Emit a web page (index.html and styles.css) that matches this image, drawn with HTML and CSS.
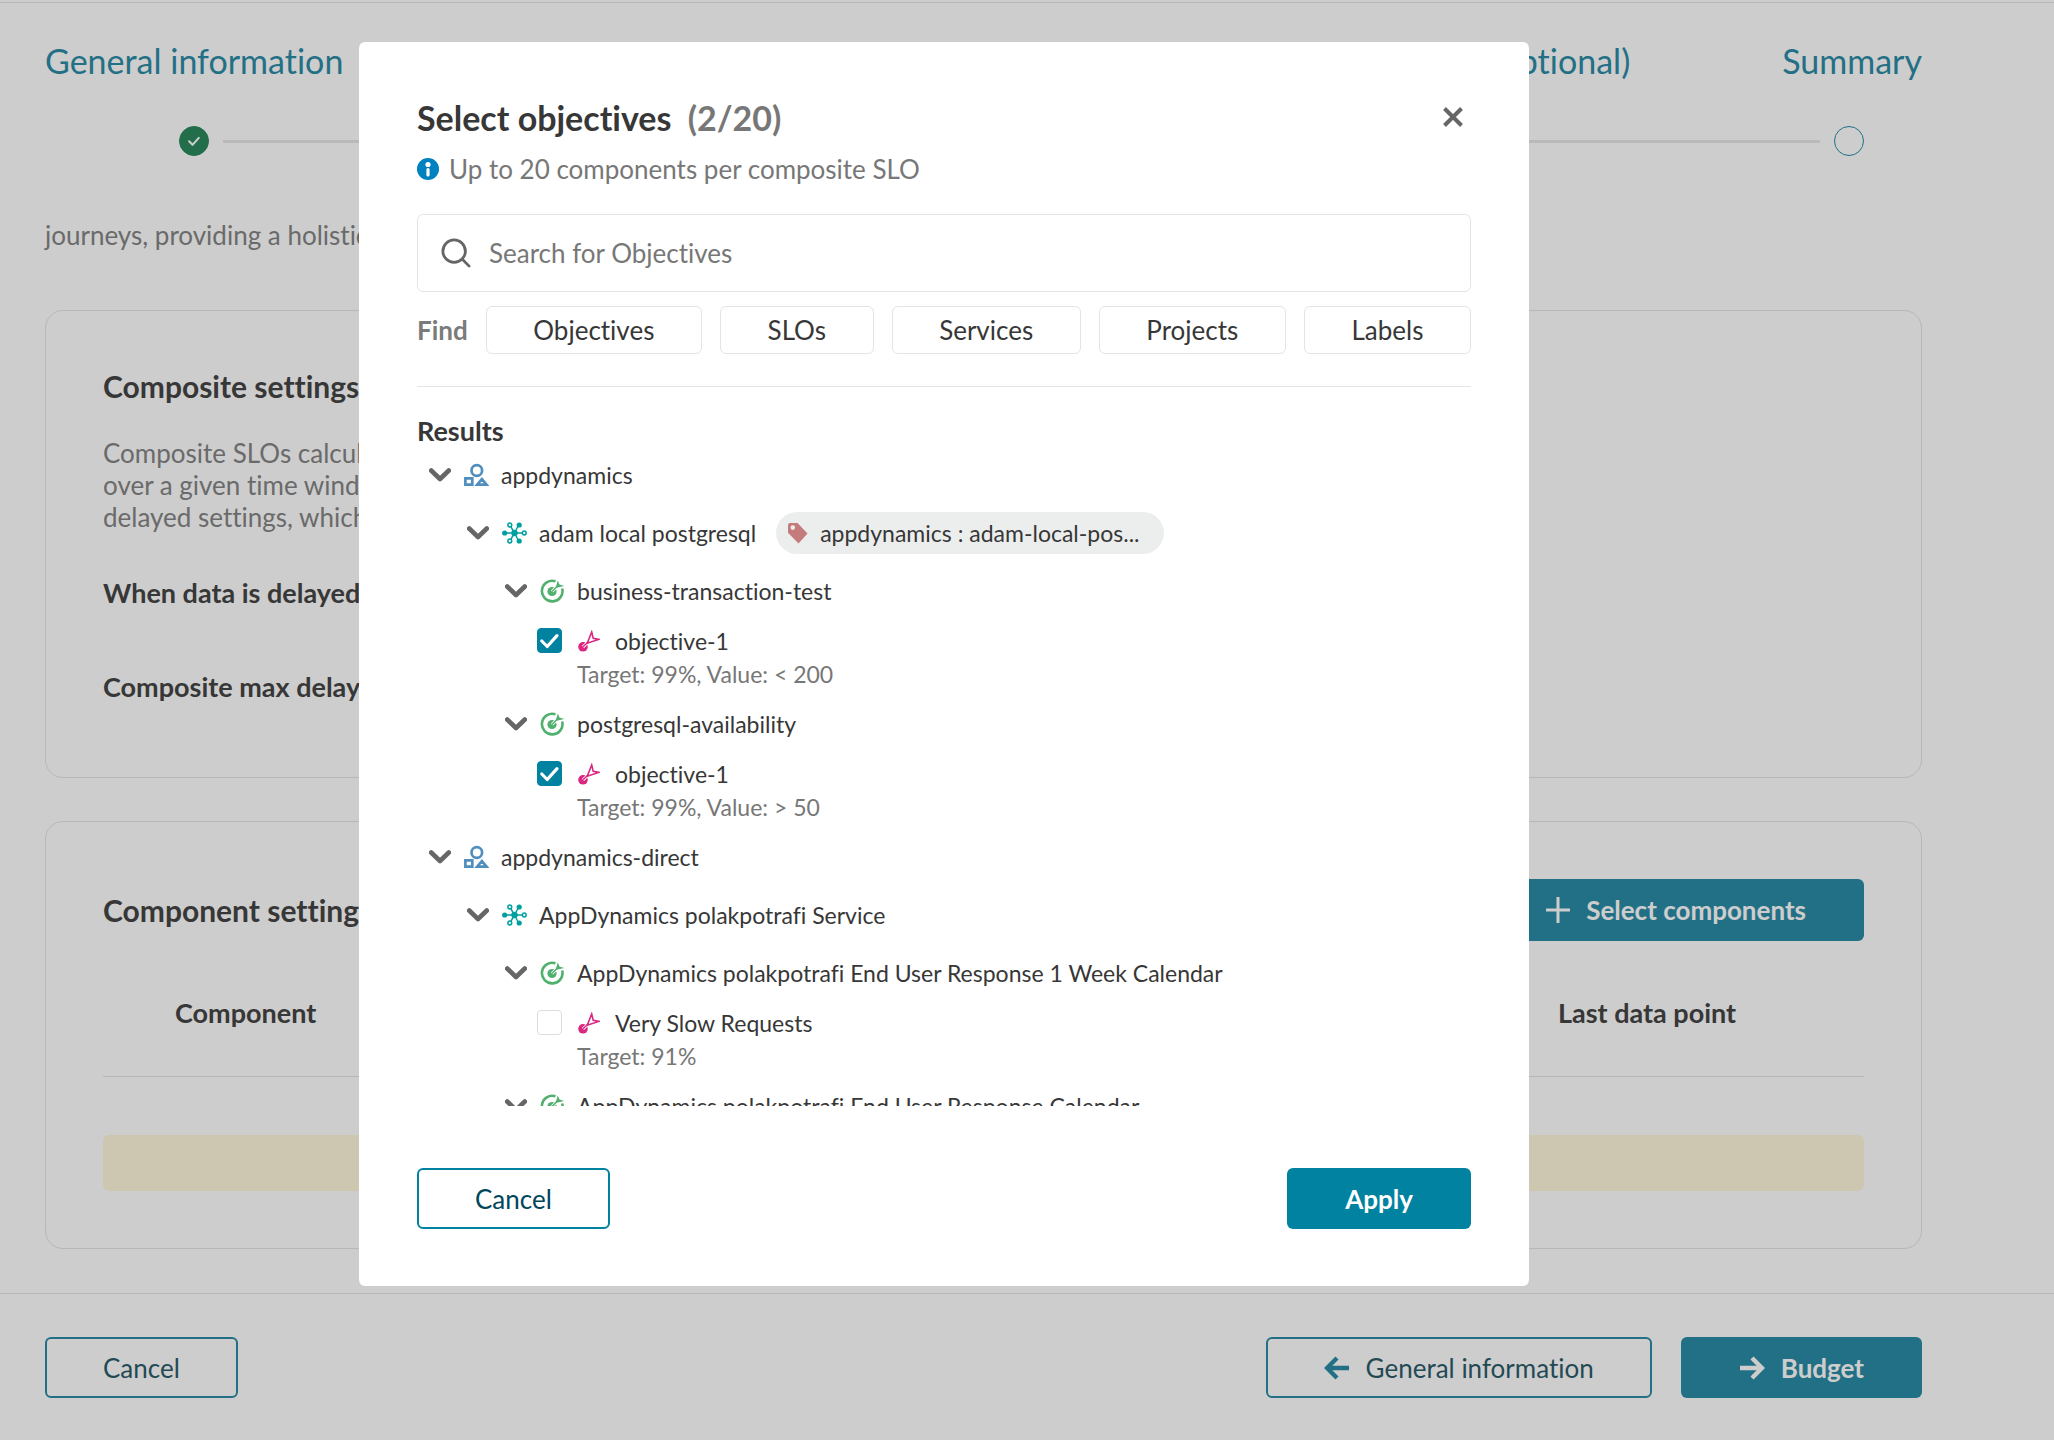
FILE: index.html
```html
<!DOCTYPE html>
<html lang="en">
<head>
<meta charset="utf-8">
<title>Create composite SLO</title>
<meta name="viewport" content="width=device-width, initial-scale=1">
<link rel="stylesheet" href="styles.css">
</head>
<body>
<svg class="sprite" aria-hidden="true">
  <symbol id="i-chevron" viewBox="0 0 22 14"><path d="M2.2 2.5 11 11l8.800-8.500" fill="none" stroke="currentColor" stroke-width="4.600" stroke-linecap="round" stroke-linejoin="round"/></symbol>
  <symbol id="i-project" viewBox="0 0 25 22"><g fill="none" stroke="currentColor" stroke-width="2.700"><circle cx="12.800" cy="6.500" r="5.300"/><path d="M1.400 14.400h6.900v6.200H1.400zM13.200 20.600l4.700-5.600 4.600 5.600z"/></g></symbol>
  <symbol id="i-service" viewBox="0 0 25 22"><g stroke="currentColor" stroke-width="1.500" fill="none"><path d="M3 11h17M12.500 11 8.800 4.600M12.500 11l3.900-7.500M12.500 11l-3.700 6.400M12.500 11l3.900 7.500"/><circle cx="22.300" cy="11" r="1.900"/><circle cx="7.800" cy="3" r="1.900"/><circle cx="7.800" cy="19" r="1.900"/></g><g fill="currentColor"><circle cx="12.500" cy="11" r="3.200"/><circle cx="2.700" cy="11" r="2.600"/><circle cx="17.200" cy="3" r="2.600"/><circle cx="17.200" cy="19" r="2.600"/></g></symbol>
  <symbol id="i-slo" viewBox="0 0 24 24"><path d="M15 2.300A10.300 10.300 0 1 0 21.700 9.500" fill="none" stroke="currentColor" stroke-width="2.600"/><circle cx="11.500" cy="12.500" r="4.600" fill="currentColor"/><path d="M11.500 12.500 17 7" stroke="#fff" stroke-width="3"/><path d="M11.500 12.500 17 7" stroke="currentColor" stroke-width="1.500"/><path d="m15 8.900 2.300-7.400 1.700 4.100 4.700 1.400z" fill="currentColor"/></symbol>
  <symbol id="i-objective" viewBox="0 0 22 22"><circle cx="5" cy="16.800" r="4.800" fill="currentColor"/><path d="M5 16.800 10 12" stroke="#fff" stroke-width="3"/><path d="M5 16.800 10.500 11.500" stroke="currentColor" stroke-width="1.400"/><path d="M9.200 13.200 13.700 2l1.500 6.300 5.600 1.100z" fill="none" stroke="currentColor" stroke-width="1.600"/></symbol>
  <symbol id="i-tag" viewBox="0 0 20 21"><path fill="currentColor" fill-rule="evenodd" d="M2 0h7.500L19.500 10.500 10.500 20.500 0 9.800V2a2 2 0 0 1 2-2zm2.800 2.300a2.300 2.300 0 1 0 0 4.600 2.300 2.300 0 0 0 0-4.600z"/></symbol>
  <symbol id="i-tick" viewBox="0 0 25 25"><path d="m4.800 13 5.400 5.500L20 7.700" fill="none" stroke="currentColor" stroke-width="3.200" stroke-linecap="round" stroke-linejoin="round"/></symbol>
  <symbol id="i-arrow" viewBox="0 0 26 24"><path d="M1 12h22M13 2l10 10-10 10" fill="none" stroke="currentColor" stroke-width="4.400"/></symbol>
</svg>

<main class="page">
  <header class="stepper">
    <nav class="step-names">
      <a href="#general">General information</a>
      <a href="#optional" class="step-late">Alerts (optional)</a>
      <a href="#summary">Summary</a>
    </nav>
    <div class="track">
      <span class="dot dot-done"><svg class="dot-tick"><use href="#i-tick"/></svg></span>
      <span class="rail"></span>
      <span class="dot"></span>
    </div>
  </header>

  <p class="lead">journeys, providing a holistic</p>

  <section class="card">
    <h2>Composite settings</h2>
    <p class="about">Composite SLOs calculate<br>over a given time window<br>delayed settings, which</p>
    <h3>When data is delayed</h3>
    <h3>Composite max delay</h3>
  </section>

  <section class="card">
    <div class="card-head">
      <h2>Component settings</h2>
      <button class="btn btn-page btn-tall"><svg class="plus" viewBox="0 0 24 26"><path d="M12 0v26M0 13h24" stroke="currentColor" stroke-width="3"/></svg>Select components</button>
    </div>
    <table class="components">
      <thead><tr><th>Component</th><th class="last">Last data point</th></tr></thead>
    </table>
    <div class="notice"></div>
  </section>
</main>

<footer class="bar">
  <button class="btn btn-line btn-line-page">Cancel</button>
  <div class="bar-end">
    <button class="btn btn-line btn-line-page"><svg class="arrow back"><use href="#i-arrow"/></svg>General information</button>
    <button class="btn btn-page"><svg class="arrow"><use href="#i-arrow"/></svg>Budget</button>
  </div>
</footer>

<div class="overlay">
  <div class="modal" role="dialog" aria-modal="true" aria-labelledby="modal-title">
    <div class="modal-head">
      <h1 id="modal-title">Select objectives <span>(2/20)</span></h1>
      <button class="close" aria-label="Close"><svg viewBox="0 0 22 22"><path d="m2.500 2.500 17 17m0-17-17 17" stroke="currentColor" stroke-width="4"/></svg></button>
    </div>
    <p class="hint"><svg viewBox="0 0 22 22"><circle cx="11" cy="11" r="11" fill="#0082c0"/><circle cx="11" cy="6.500" r="2.600" fill="#fff"/><path d="M11 11.500v5.500" stroke="#fff" stroke-width="3.200" stroke-linecap="round"/></svg>Up to 20 components per composite SLO</p>
    <label class="search">
      <svg viewBox="0 0 32 32"><g fill="none" stroke="currentColor" stroke-width="3" stroke-linecap="round"><circle cx="14" cy="14" r="12"/><path d="m23 23 7 7"/></g></svg>
      <input type="text" placeholder="Search for Objectives" aria-label="Search for Objectives">
    </label>
    <div class="find">
      <span>Find</span>
      <button>Objectives</button><button>SLOs</button><button>Services</button><button>Projects</button><button>Labels</button>
    </div>
    <h2 class="results">Results</h2>
    <ul class="tree">
      <li>
        <div class="row"><button class="fold" aria-label="Collapse appdynamics"><svg><use href="#i-chevron"/></svg></button><svg class="kind project"><use href="#i-project"/></svg>appdynamics</div>
        <ul>
          <li>
            <div class="row"><button class="fold" aria-label="Collapse adam local postgresql"><svg><use href="#i-chevron"/></svg></button><svg class="kind service"><use href="#i-service"/></svg>adam local postgresql <span class="chip"><svg><use href="#i-tag"/></svg>appdynamics : adam-local-pos...</span></div>
            <ul>
              <li>
                <div class="row"><button class="fold" aria-label="Collapse business-transaction-test"><svg><use href="#i-chevron"/></svg></button><svg class="kind slo"><use href="#i-slo"/></svg>business-transaction-test</div>
                <div class="objective">
                  <label><span class="box"><input type="checkbox" checked><svg><use href="#i-tick"/></svg></span><svg class="goal"><use href="#i-objective"/></svg>objective-1</label>
                  <p>Target: 99%, Value: &lt; 200</p>
                </div>
              </li>
              <li>
                <div class="row"><button class="fold" aria-label="Collapse postgresql-availability"><svg><use href="#i-chevron"/></svg></button><svg class="kind slo"><use href="#i-slo"/></svg>postgresql-availability</div>
                <div class="objective">
                  <label><span class="box"><input type="checkbox" checked><svg><use href="#i-tick"/></svg></span><svg class="goal"><use href="#i-objective"/></svg>objective-1</label>
                  <p>Target: 99%, Value: &gt; 50</p>
                </div>
              </li>
            </ul>
          </li>
        </ul>
      </li>
      <li>
        <div class="row"><button class="fold" aria-label="Collapse appdynamics-direct"><svg><use href="#i-chevron"/></svg></button><svg class="kind project"><use href="#i-project"/></svg>appdynamics-direct</div>
        <ul>
          <li>
            <div class="row"><button class="fold" aria-label="Collapse AppDynamics polakpotrafi Service"><svg><use href="#i-chevron"/></svg></button><svg class="kind service"><use href="#i-service"/></svg>AppDynamics polakpotrafi Service</div>
            <ul>
              <li>
                <div class="row"><button class="fold" aria-label="Collapse 1 Week Calendar"><svg><use href="#i-chevron"/></svg></button><svg class="kind slo"><use href="#i-slo"/></svg>AppDynamics polakpotrafi End User Response 1 Week Calendar</div>
                <div class="objective">
                  <label><span class="box"><input type="checkbox"><svg><use href="#i-tick"/></svg></span><svg class="goal"><use href="#i-objective"/></svg>Very Slow Requests</label>
                  <p>Target: 91%</p>
                </div>
              </li>
              <li>
                <div class="row"><button class="fold" aria-label="Collapse Calendar"><svg><use href="#i-chevron"/></svg></button><svg class="kind slo"><use href="#i-slo"/></svg>AppDynamics polakpotrafi End User Response Calendar</div>
              </li>
            </ul>
          </li>
        </ul>
      </li>
    </ul>
    <div class="modal-foot">
      <button class="btn btn-line">Cancel</button>
      <button class="btn btn-main">Apply</button>
    </div>
  </div>
</div>
</body>
</html>
```

FILE: styles.css
```css
:root {
  --ink: #373737;
  --muted: #777;
  --line: #e2e2e2;
  --teal: #0082a0;
  --teal-page: #1b83a0;
  --navy: #00475c;
  --text-s: 23px;
  --text-m: 26px;
  --text-bold: 27px;
  --text-l: 30px;
  --text-xl: 34px;
}

* { box-sizing: border-box; }

body {
  margin: 0;
  min-height: 100vh;
  display: flex;
  flex-direction: column;
  padding-top: 2px;
  background: #fff;
  color: var(--ink);
  font: 400 var(--text-m)/32px Lato, "Open Sans", sans-serif;
  font-variant-ligatures: none;
}

h1, h2, h3, p, ul { margin: 0; padding: 0; }
ul { list-style: none; }
button, input { font: inherit; color: inherit; font-variant-ligatures: none; }
button { cursor: pointer; }
svg { flex: none; display: block; }
.sprite { position: absolute; width: 0; height: 0; }

/* Wizard page */
.page {
  flex: 1;
  border-top: 1px solid var(--line);
  padding: 38px 132px 40px 45px;
}

.step-names {
  display: flex;
  gap: 152px;
  font-size: var(--text-xl);
  line-height: 40px;
}
.step-names a { color: var(--teal-page); text-decoration: none; }
.step-late { margin-left: auto; }

.track {
  display: flex;
  align-items: center;
  gap: 14px;
  padding: 0 58px 0 134px;
  margin-top: 45px;
}
.rail { flex: 1; height: 3px; background: #e4e4e4; }
.dot {
  width: 30px;
  height: 30px;
  border: 1px solid var(--teal-page);
  border-radius: 50%;
  display: grid;
  place-items: center;
}
.dot-done { background: #1c8050; border-color: #1c8050; color: #fff; }
.dot-tick { width: 16px; height: 16px; }

.lead { margin-top: 63px; color: #7b7b7b; }

.card {
  margin-top: 59px;
  padding: 57px;
  border: 1px solid var(--line);
  border-radius: 18px;
}
.card + .card { margin-top: 43px; }
.card h2 { font-size: var(--text-l); line-height: 36px; }
.card h3 { font-size: var(--text-bold); line-height: 32px; margin-top: 62px; }
.about { margin-top: 33px; color: #7b7b7b; line-height: 32px; }
.about + h3 { margin-top: 44px; }
.card:has(h3) { padding-bottom: 74px; }

.card-head { display: flex; align-items: center; justify-content: space-between; }
.components { width: 100%; margin-top: 29px; border-collapse: collapse; }
.components th {
  height: 106px;
  padding: 0 0 20px 72px;
  border-bottom: 1px solid #e0e0e0;
  font-size: var(--text-bold);
  text-align: left;
  vertical-align: middle;
}
.components .last { width: 306px; padding-left: 0; }
.notice { margin-top: 58px; height: 56px; border-radius: 6px; background: #fff6da; }

.btn {
  display: inline-flex;
  align-items: center;
  justify-content: center;
  gap: 16px;
  height: 61px;
  padding: 0 56px;
  border: 2px solid transparent;
  border-radius: 6px;
  background: none;
}
.btn-line { border-color: var(--teal); color: var(--navy); }
.btn-line-page { border-color: var(--teal-page); color: #1b4f60; }
.btn-line-page svg { color: var(--teal-page); }
.btn-page { background: var(--teal-page); color: #fff; font-weight: 700; }
.btn-main { background: var(--teal); color: #fff; font-weight: 700; }
.btn-tall { height: 62px; }
.plus { width: 24px; height: 26px; }
.arrow { width: 26px; height: 24px; }
.back { transform: scaleX(-1); }

.bar {
  display: flex;
  justify-content: space-between;
  padding: 43px 132px 42px 45px;
  border-top: 1px solid var(--line);
}
.bar-end { display: flex; gap: 29px; }

/* Dialog */
.overlay {
  position: fixed;
  inset: 0;
  display: flex;
  justify-content: center;
  padding: 42px 166px 154px 0;
  background: rgba(55, 55, 55, .25);
}
.modal {
  display: flex;
  flex-direction: column;
  width: 1170px;
  padding: 56px 58px 57px;
  border-radius: 6px;
  background: #fff;
}
.modal-head { display: flex; justify-content: space-between; align-items: flex-start; }
.modal h1 { font-size: var(--text-xl); line-height: 40px; }
.modal h1 span { margin-left: 8px; color: var(--muted); }
.close { padding: 8px 0 0; margin-right: 7px; border: 0; background: none; color: #666; }
.close svg { width: 22px; height: 22px; }

.hint { display: flex; align-items: center; gap: 10px; margin-top: 15px; color: var(--muted); }
.hint svg { width: 22px; height: 22px; }

.search {
  display: flex;
  align-items: center;
  gap: 18px;
  height: 78px;
  flex: none;
  margin-top: 29px;
  padding: 0 23px;
  border: 1px solid #e4e4e4;
  border-radius: 6px;
}
.search svg { width: 30px; height: 30px; color: #666; }
.search input { flex: 1; border: 0; outline: 0; padding: 0; background: none; }
.search input::placeholder { color: var(--muted); opacity: 1; }

.find {
  display: flex;
  align-items: center;
  gap: 18px;
  margin-top: 14px;
  padding-bottom: 32px;
  border-bottom: 1px solid #e4e4e4;
}
.find span { color: #7b7b7b; font-weight: 700; }
.find button {
  flex: auto;
  height: 48px;
  padding: 0 40px;
  border: 1px solid #e4e4e4;
  border-radius: 6px;
  background: none;
}

.results { margin-top: 28px; font-size: var(--text-bold); line-height: 31px; }

.tree {
  flex: 1 1 0;
  min-height: 0;
  overflow-y: auto;
  scrollbar-width: none;
  padding-left: 12px;
  font-size: var(--text-s);
}
.tree ul { padding-left: 38px; }
.row { display: flex; align-items: center; height: 58px; white-space: nowrap; }
.fold { padding: 0; margin-right: 13px; border: 0; background: none; color: #666; }
.fold svg { width: 22px; height: 14px; }
.kind { width: 25px; height: 24px; margin-right: 12px; }
.project { color: #508fbd; }
.service { color: #00a0a0; }
.slo { color: #50b06e; }
.chip {
  display: inline-flex;
  align-items: center;
  gap: 12px;
  height: 42px;
  margin-left: 20px;
  padding: 0 24px 0 12px;
  border-radius: 21px;
  background: #eceeed;
}
.chip svg { width: 20px; height: 21px; color: #c47b7b; }

.objective { padding-left: 32px; height: 75px; }
.objective label { display: flex; align-items: center; width: max-content; height: 41px; }
.objective p { padding-left: 40px; color: var(--muted); line-height: 27px; }
.box { display: grid; width: 25px; height: 25px; margin-right: 16px; }
.box > * { grid-area: 1 / 1; width: 25px; height: 25px; margin: 0; }
.box input { appearance: none; border: 1px solid #ddd; border-radius: 4px; background: #fff; }
.box input:checked { border-color: var(--teal); background: var(--teal); }
.box svg { color: #fff; pointer-events: none; }
.goal { width: 22px; height: 22px; margin-right: 15px; color: #db2780; }

.modal-foot { display: flex; justify-content: space-between; margin-top: 62px; }
```
